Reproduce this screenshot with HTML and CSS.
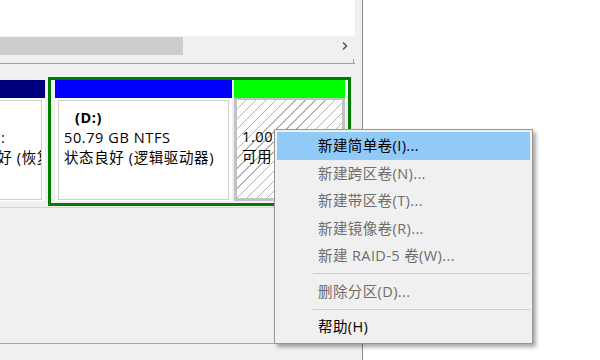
FILE: index.html
```html
<!DOCTYPE html>
<html lang="zh-CN">
<head>
  <meta charset="UTF-8" />
  <meta name="viewport" content="width=device-width, initial-scale=1.0" />
  <title>磁盘管理</title>
  <link rel="stylesheet" href="styles.css">
</head>
<body>
  <div class="pane">
    <div class="list">
      <div class="list-body"></div>
      <div class="hscroll">
        <div class="thumb"></div>
        <svg class="arrow" width="8" height="10" viewBox="0 0 8 10">
          <path d="M2 1.5 L5.5 5 L2 8.5" fill="none" stroke="#5a5a5a" stroke-width="1.6" />
        </svg>
      </div>
      <div class="list-foot"><span class="tick"></span></div>
    </div>

    <div class="disk">
      <div class="parts">
        <div class="part part-left">
          <div class="part-head head-navy"></div>
          <div class="part-body">
            <div class="part-box">
              <div class="line">&nbsp;</div>
              <div class="line colon">:</div>
              <div class="line">状态良好 (恢复</div>
            </div>
          </div>
        </div>

        <div class="extended">
          <div class="part part-d">
            <div class="part-head head-blue"></div>
            <div class="part-body">
              <div class="part-box">
                <div class="line name">(D:)</div>
                <div class="line">50.79 GB NTFS</div>
                <div class="line">状态良好 (逻辑驱动器)</div>
              </div>
            </div>
          </div>
          <div class="part part-free">
            <div class="part-head head-lime"></div>
            <div class="free-body">
              <div class="line">&nbsp;</div>
              <div class="line">1.00 GB</div>
              <div class="line">可用</div>
            </div>
          </div>
        </div>
      </div>
    </div>

    <div class="disk2"></div>
  </div>

  <div class="side"></div>

  <div class="menu">
    <div class="menu-item active">新建简单卷(I)...</div>
    <div class="menu-item">新建跨区卷(N)...</div>
    <div class="menu-item">新建带区卷(T)...</div>
    <div class="menu-item">新建镜像卷(R)...</div>
    <div class="menu-item">新建 RAID-5 卷(W)...</div>
    <div class="menu-sep"></div>
    <div class="menu-item">删除分区(D)...</div>
    <div class="menu-sep"></div>
    <div class="menu-item enabled">帮助(H)</div>
  </div>
</body>
</html>
```

FILE: styles.css
```css
body {
  margin: 0;
  width: 600px;
  height: 360px;
  overflow: hidden;
  display: flex;
  background-color: #fff;
  font-family: "Open Sans", "Noto Sans CJK SC", sans-serif;
  font-size: 14.5px;
  color: #000;
}
.pane {
  width: 362px;
  height: 360px;
  background-color: #f0f0f0;
  border-right: 1px solid #8c8c8c;
  overflow: hidden;
}
.side {
  flex: 1;
  background-color: #fff;
}

/* list view with horizontal scrollbar */
.list {
  width: 355px;
  border-bottom: 1px solid #a0a0a0;
}
.list-body {
  height: 36px;
  background-color: #fff;
}
.hscroll {
  height: 20px;
  display: flex;
  align-items: center;
  justify-content: space-between;
  background-color: #f0f0f0;
}
.thumb {
  width: 183px;
  height: 18px;
  background-color: #cdcdcd;
}
.arrow {
  margin-right: 6px;
}
.list-foot {
  height: 7px;
  display: flex;
  justify-content: flex-end;
  align-items: flex-end;
}
.tick {
  width: 1px;
  height: 4px;
  margin-right: 1px;
  background-color: #a0a0a0;
}

/* disk row */
.disk {
  height: 130px;
  padding-top: 13px;
  border-bottom: 1px solid #d4d4d4;
}
.disk2 {
  height: 135px;
  border-bottom: 1px solid #a8a8a8;
}
.parts {
  display: flex;
  align-items: flex-start;
  gap: 3px;
}
.part {
  display: flex;
  flex-direction: column;
}
.part-head {
  height: 18px;
}
.head-navy { background-color: #00007e; }
.head-blue { background-color: #0000ff; }
.head-lime { background-color: #00ff00; }
.part-body {
  flex: 1;
  padding: 2px 3px 1px 3px;
  background-color: #fff;
  display: flex;
}
.part-box {
  flex: 1;
  overflow: hidden;
  white-space: nowrap;
  border: 1px solid #cfcfcf;
  background-color: #fff;
  padding: 7px 0 0 5px;
}
.line {
  height: 20px;
  line-height: 20px;
  letter-spacing: 0.6px;
}
.name {
  font-weight: bold;
  padding-left: 11px;
}
.colon {
  padding-left: 49px;
}

.part-left {
  margin-left: -57px;
  margin-top: 3px;
  width: 102px;
  height: 121px;
}

.extended {
  display: flex;
  gap: 2px;
  width: 303px;
  height: 129px;
  box-sizing: border-box;
  border: 3px solid #007c00;
  padding: 0 3px 2px 4px;
  background-color: #f0f0f0;
}
.part-d {
  width: 177px;
}
.part-free {
  flex: 1;
}
.free-body {
  flex: 1;
  overflow: hidden;
  white-space: nowrap;
  border: 3px solid #c2c2c2;
  border-top-width: 2px;
  padding: 7px 0 0 5px;
  background: repeating-linear-gradient(135deg, #fff 0 6px, #b4b4b4 6px 7px);
}

/* context menu */
.menu {
  position: absolute;
  left: 274px;
  top: 129px;
  width: 259px;
  box-sizing: border-box;
  padding: 2px;
  border: 1px solid #979797;
  background-color: #f0f0f0;
  box-shadow: 3px 3px 4px rgba(0, 0, 0, 0.35);
}
.menu-item {
  height: 27.5px;
  line-height: 27.5px;
  padding-left: 41px;
  color: #6d6d6d;
  letter-spacing: 0.4px;
  white-space: nowrap;
}
.menu-item.active {
  background-color: #91c9f7;
  color: #000;
}
.menu-item.enabled {
  color: #000;
}
.menu-sep {
  height: 8px;
  margin-left: 36px;
  display: flex;
  align-items: center;
}
.menu-sep::after {
  content: "";
  flex: 1;
  height: 1px;
  background-color: #cfcfcf;
}
```
